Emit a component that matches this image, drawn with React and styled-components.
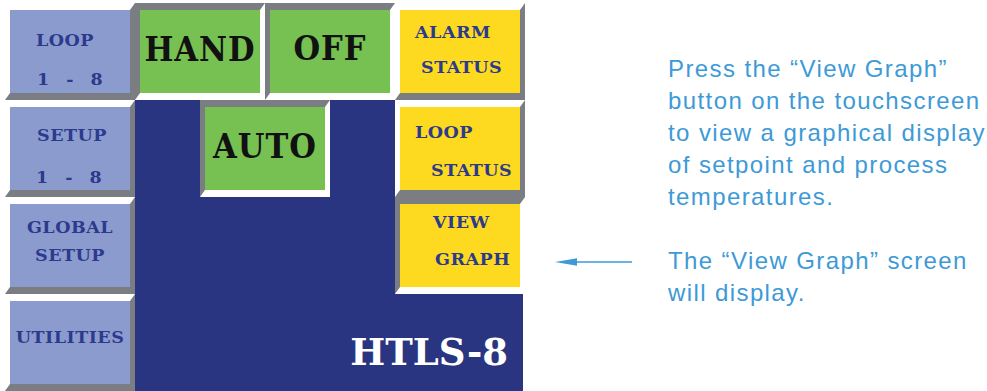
import React from "react";
import styled, { createGlobalStyle } from "styled-components";

const GREY = "#7a7e82";

const Global = createGlobalStyle`
  html, body { margin: 0; padding: 0; background: #ffffff; }
  body { width: 987px; height: 391px; overflow: hidden; }
`;

const Page = styled.div`
  display: flex;
  align-items: flex-start;
  gap: 30px;
  padding: 3px 0 0 5px;
`;

const Screen = styled.div`
  display: grid;
  grid-template-columns: repeat(8, 65px);
  grid-template-rows: repeat(4, 97px);
`;

const Panel = styled.div`
  grid-column: 3 / 9;
  grid-row: 2 / 5;
  margin-right: 2px;
  background: #2a3581;
  display: flex;
  flex-direction: column;
  justify-content: flex-end;
  align-items: flex-end;
  padding: 0 15px 20px 0;
`;

const Brand = styled.div`
  font-family: "DejaVu Serif", serif;
  font-weight: bold;
  font-size: 37px;
  line-height: 37px;
  color: #ffffff;
`;

const tones = {
  lilac: { bg: "#8b9bcd", fg: "#2b3a8c" },
  green: { bg: "#77c152", fg: "#111111" },
  yellow: { bg: "#fdd91f", fg: "#2b3a8c" },
};

const Key = styled.div`
  grid-column: ${(p) => p.$col};
  grid-row: ${(p) => p.$row};
  box-sizing: border-box;
  border-style: solid;
  border-width: 7px 5px;
  border-color: ${(p) =>
    p.$sunken ? `${GREY} #ffffff #ffffff ${GREY}` : `#ffffff ${GREY} ${GREY} #ffffff`};
  background: ${(p) => tones[p.$tone].bg};
  color: ${(p) => tones[p.$tone].fg};
  display: flex;
  flex-direction: column;
  align-items: ${(p) => (p.$center ? "center" : "flex-start")};
  padding-top: ${(p) => p.$pt || 0}px;
  gap: ${(p) => p.$gap || 0}px;
`;

const Label = styled.span`
  display: block;
  font-family: "DejaVu Serif", serif;
  font-weight: bold;
  font-size: 17.5px;
  line-height: 18px;
  white-space: pre;
  letter-spacing: 0.5px;
  word-spacing: ${(p) => p.$spread || 0}px;
  margin-left: ${(p) => p.$indent || 0}px;
`;

const BigLabel = styled.span`
  display: block;
  font-family: "DejaVu Serif", serif;
  font-weight: bold;
  font-stretch: condensed;
  font-size: 34px;
  line-height: 34px;
  letter-spacing: 1px;
  white-space: pre;
`;

const Notes = styled.div`
  display: grid;
  grid-template-columns: 113px auto;
  row-gap: 32px;
  padding-top: 50px;
  font-family: "Liberation Sans", Arial, sans-serif;
  font-size: 24px;
  line-height: 32px;
  letter-spacing: 1.4px;
  color: #3d9ad6;
`;

const Para = styled.p`
  grid-column: 2;
  margin: 0;
  white-space: nowrap;
`;

const ArrowCell = styled.div`
  grid-column: 1;
  padding-top: 12px;
  display: flex;
`;

const Arrow = () => (
  <svg width="78" height="10" viewBox="0 0 78 10">
    <line x1="20" y1="5" x2="77" y2="5" stroke="#3d9ad6" strokeWidth="1.5" />
    <polygon points="0,5 22,1.2 22,8.8" fill="#3d9ad6" />
  </svg>
);

export default function App() {
  return (
    <>
      <Global />
      <Page>
        <Screen>
          <Panel>
            <Brand>HTLS-8</Brand>
          </Panel>

          <Key $col="1 / 3" $row="1" $tone="lilac" $pt={21} $gap={21}>
            <Label $indent={26}>LOOP</Label>
            <Label $indent={27} $spread={10}>1 - 8</Label>
          </Key>
          <Key $col="1 / 3" $row="2" $tone="lilac" $pt={19} $gap={24}>
            <Label $indent={27}>SETUP</Label>
            <Label $indent={26} $spread={10}>1 - 8</Label>
          </Key>
          <Key $col="1 / 3" $row="3" $tone="lilac" $pt={14} $gap={10} $center>
            <Label>GLOBAL</Label>
            <Label>SETUP</Label>
          </Key>
          <Key $col="1 / 3" $row="4" $tone="lilac" $pt={27} $center>
            <Label>UTILITIES</Label>
          </Key>

          <Key $col="3 / 5" $row="1" $tone="green" $sunken $pt={22} $center>
            <BigLabel>HAND</BigLabel>
          </Key>
          <Key $col="5 / 7" $row="1" $tone="green" $sunken $pt={21} $center>
            <BigLabel>OFF</BigLabel>
          </Key>
          <Key $col="4 / 6" $row="2" $tone="green" $sunken $pt={22} $center>
            <BigLabel>AUTO</BigLabel>
          </Key>

          <Key $col="7 / 9" $row="1" $tone="yellow" $pt={13} $gap={17}>
            <Label $indent={15}>ALARM</Label>
            <Label $indent={21}>STATUS</Label>
          </Key>
          <Key $col="7 / 9" $row="2" $tone="yellow" $pt={16} $gap={20}>
            <Label $indent={15}>LOOP</Label>
            <Label $indent={31}>STATUS</Label>
          </Key>
          <Key $col="7 / 9" $row="3" $tone="yellow" $sunken $pt={9} $gap={19}>
            <Label $indent={33}>VIEW</Label>
            <Label $indent={35}>GRAPH</Label>
          </Key>
        </Screen>

        <Notes>
          <Para>
            Press the “View Graph”
            <br />
            button on the touchscreen
            <br />
            to view a graphical display
            <br />
            of setpoint and process
            <br />
            temperatures.
          </Para>
          <ArrowCell>
            <Arrow />
          </ArrowCell>
          <Para>
            The “View Graph” screen
            <br />
            will display.
          </Para>
        </Notes>
      </Page>
    </>
  );
}
